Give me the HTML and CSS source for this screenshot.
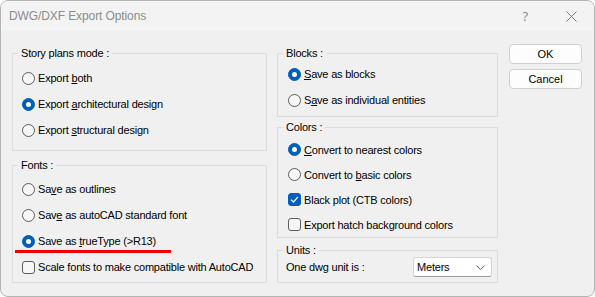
FILE: index.html
```html
<!DOCTYPE html>
<html lang="en">
<head>
    <meta charset="UTF-8">
    <title>DWG/DXF Export Options</title>
    <link rel="stylesheet" href="styles.css">
</head>
<body>

    <div class="window">

        <!-- title bar -->
        <div class="titlebar">
            <span class="title">DWG/DXF Export Options</span>
            <span class="help">?</span>
            <svg class="close" width="11" height="11" viewBox="0 0 11 11">
                <path d="M0.5 0.5 L10.5 10.5 M10.5 0.5 L0.5 10.5" stroke="#7a7a7a" stroke-width="1" fill="none"/>
            </svg>
        </div>

        <div class="client">

            <!-- left column -->
            <div class="col col-left">
                <fieldset class="group story">
                    <legend>Story plans mode :</legend>
                    <div class="row"><span class="radio"></span><span>Export <u>b</u>oth</span></div>
                    <div class="row"><span class="radio on"></span><span>Export <u>a</u>rchitectural design</span></div>
                    <div class="row"><span class="radio"></span><span>Export <u>s</u>tructural design</span></div>
                </fieldset>

                <fieldset class="group fonts">
                    <legend>Fonts :</legend>
                    <div class="row"><span class="radio"></span><span>Sa<u>v</u>e as outlines</span></div>
                    <div class="row"><span class="radio"></span><span>Sav<u>e</u> as autoCAD standard font</span></div>
                    <div class="row marked"><span class="radio on"></span><span>Save as <u>t</u>rueType (&gt;R13)</span></div>
                    <div class="row"><span class="check"></span><span>Scale fonts to make compatible with AutoCAD</span></div>
                </fieldset>
            </div>

            <!-- right column -->
            <div class="col col-right">
                <fieldset class="group blocks">
                    <legend>Blocks :</legend>
                    <div class="row"><span class="radio on"></span><span><u>S</u>ave as blocks</span></div>
                    <div class="row"><span class="radio"></span><span>S<u>a</u>ve as individual entities</span></div>
                </fieldset>

                <fieldset class="group colors">
                    <legend>Colors :</legend>
                    <div class="row"><span class="radio on"></span><span><u>C</u>onvert to nearest colors</span></div>
                    <div class="row"><span class="radio"></span><span>Convert to <u>b</u>asic colors</span></div>
                    <div class="row">
                        <span class="check on">
                            <svg width="9" height="9" viewBox="0 0 9 9"><path d="M1 4.6 L3.4 7 L8 1.8" stroke="#fff" stroke-width="1.2" fill="none"/></svg>
                        </span>
                        <span>Black plot (CTB colors)</span>
                    </div>
                    <div class="row"><span class="check"></span><span>Export hatch background colors</span></div>
                </fieldset>

                <fieldset class="group units">
                    <legend>Units :</legend>
                    <div class="unit-row">
                        <span>One dwg unit is :</span>
                        <div class="select">
                            <span>Meters</span>
                            <svg width="9" height="5" viewBox="0 0 9 5"><path d="M0.5 0.5 L4.5 4.5 L8.5 0.5" stroke="#666" stroke-width="1" fill="none"/></svg>
                        </div>
                    </div>
                </fieldset>
            </div>

            <!-- buttons -->
            <div class="col buttons">
                <button>OK</button>
                <button>Cancel</button>
            </div>

        </div>
    </div>

</body>
</html>
```

FILE: styles.css
```css
body {
    margin: 0;
    background-color: #ffffff;
    font-family: 'Liberation Sans', Arial, sans-serif;
    font-size: 11px;
    letter-spacing: -0.2px;
    color: #000;
}

.window {
    width: 595px;
    height: 297px;
    box-sizing: border-box;
    border: 1px solid #b4b4b4;
    border-radius: 8px;
    background-color: #f0f0f0;
    overflow: hidden;
}

.titlebar {
    height: 30px;
    display: flex;
    align-items: center;
    padding-left: 8px;
    background-color: #f3f3f3;
}

.title {
    font-size: 12px;
    letter-spacing: -0.1px;
    color: #8c8c8c;
    flex: 1;
}

.help {
    font-family: 'Open Sans', sans-serif;
    font-size: 13px;
    color: #888;
    margin-right: 38px;
}

.close {
    margin-right: 17px;
}

.client {
    display: flex;
    padding: 13px 0 0 11px;
}

.col {
    display: flex;
    flex-direction: column;
}

.col-left {
    width: 255px;
    margin-top: 2px;
}

.col-right {
    width: 221px;
    margin-left: 10px;
    margin-top: 2px;
}

.group {
    margin: 0;
    min-width: 0;
    border: 1px solid #dcdcdc;
    padding: 0 5px 0 9px;
}

.col-right .group {
    padding-left: 10px;
}

.group legend {
    padding: 0 3px;
    margin-left: -4px;
    line-height: 14px;
}

.col-right .group legend {
    margin-left: -5px;
}

.row {
    height: 26px;
    display: flex;
    align-items: center;
    position: relative;
    white-space: nowrap;
}

.story {
    padding-top: 5px;
    padding-bottom: 7px;
}

.fonts {
    margin-top: 7px;
    padding-top: 4px;
    padding-bottom: 2px;
}

.blocks {
    padding-top: 1px;
    padding-bottom: 3px;
}

.colors {
    margin-top: 3px;
    padding-top: 3px;
    padding-bottom: 0;
}

.colors .row {
    height: 25px;
}

.units {
    margin-top: 5px;
    padding-bottom: 5px;
}

.radio {
    width: 11px;
    height: 11px;
    border: 1px solid #5c5c5c;
    border-radius: 50%;
    background-color: #f7f7f7;
    margin-right: 3px;
    flex-shrink: 0;
    position: relative;
}

.radio.on {
    background-color: #005fb8;
    border-color: #005fb8;
}

.radio.on::after {
    content: "";
    position: absolute;
    left: 3px;
    top: 3px;
    width: 5px;
    height: 5px;
    border-radius: 50%;
    background-color: #fff;
}

.check {
    width: 11px;
    height: 11px;
    border: 1px solid #5c5c5c;
    border-radius: 3px;
    background-color: #f7f7f7;
    margin-right: 3px;
    flex-shrink: 0;
    display: flex;
    align-items: center;
    justify-content: center;
}

.check.on {
    background-color: #005fb8;
    border-color: #005fb8;
}

/* red annotation under the trueType option */
.marked::after {
    content: "";
    position: absolute;
    left: -7px;
    top: 22px;
    width: 156px;
    height: 3px;
    background-color: #f00000;
}

.unit-row {
    display: flex;
    align-items: center;
    justify-content: space-between;
}

.unit-row > span {
    margin-left: -2px;
}

.select {
    width: 79px;
    height: 20px;
    box-sizing: border-box;
    background-color: #fff;
    border: 1px solid #d4d4d4;
    border-bottom-color: #9a9a9a;
    border-radius: 3px;
    display: flex;
    align-items: center;
    justify-content: space-between;
    padding: 0 6px 0 3px;
}

.buttons {
    width: 73px;
    margin-left: 11px;
    gap: 5px;
}

.buttons button {
    height: 20px;
    background-color: #fdfdfd;
    border: 1px solid #d0d0d0;
    border-radius: 4px;
    font-family: 'Liberation Sans', Arial, sans-serif;
    font-size: 11px;
    color: #000;
    padding: 0;
}
```
